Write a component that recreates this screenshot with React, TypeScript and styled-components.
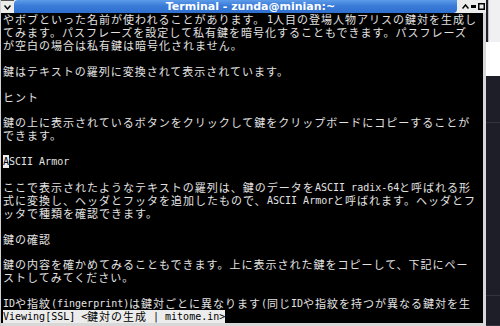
import React from "react";
import styled, { createGlobalStyle } from "styled-components";

const Global = createGlobalStyle`
  html, body { margin: 0; padding: 0; background: #1f1f2b; }
  body { width: 500px; height: 326px; overflow: hidden; }
`;

const Screen = styled.div`
  display: flex;
  width: 500px;
  height: 326px;
  overflow: hidden;
`;

const Window = styled.div`
  display: flex;
  flex-direction: column;
  width: 486px;
  height: 326px;
  background: #d8d8d8;
  border-left: 1px solid #cfcfcf;
  box-sizing: border-box;
`;

const TitleBar = styled.div`
  display: flex;
  align-items: stretch;
  height: 13px;
  background: #e9e9e9;
`;

const MenuButton = styled.div`
  width: 13px;
  display: flex;
  align-items: center;
  justify-content: center;
  background: #ececec;
  border-top: 1px solid #555;
  box-sizing: border-box;
`;

const TitleStrip = styled.div`
  flex: 1;
  display: flex;
  align-items: center;
  justify-content: center;
  padding-left: 30px;
  background: linear-gradient(#5d9ce9, #3a7bd8 45%, #2f6fcf);
  border-radius: 4px 0 4px 0;
  color: #fff;
  font-family: "DejaVu Sans", sans-serif;
  font-weight: bold;
  font-size: 11px;
  line-height: 13px;
  white-space: nowrap;
`;

const Controls = styled.div`
  width: 28px;
  display: flex;
  align-items: center;
  justify-content: flex-end;
  gap: 2px;
  padding-right: 1px;
  background: #ececec;
`;

const Body = styled.div`
  flex: 1;
  display: flex;
  flex-direction: column;
  background: #000;
  padding-left: 2px;
  margin-right: 3px;
  margin-bottom: 3px;
  overflow: hidden;
`;

const Line = styled.div`
  display: flex;
  align-items: center;
  height: 13px;
  white-space: pre;
  color: #e2e2e2;
`;

const Run = styled.span<{ $cells: number; $wide: boolean; $inverse?: boolean }>`
  display: inline-block;
  flex: none;
  width: ${(p) => p.$cells * (p.$wide ? 12 : 6)}px;
  line-height: 13px;
  font-family: ${(p) =>
    p.$wide ? '"Noto Sans CJK JP", sans-serif' : '"DejaVu Sans Mono", monospace'};
  font-size: ${(p) => (p.$wide ? "11px" : "10px")};
  letter-spacing: ${(p) => (p.$wide ? "1px" : "0")};
  background: ${(p) => (p.$inverse ? "#ececec" : "transparent")};
  color: ${(p) => (p.$inverse ? "#000" : "#e2e2e2")};
`;

const Desktop = styled.div`
  flex: 1;
  display: flex;
  flex-direction: column;
`;

const DeskTop = styled.div`
  height: 42px;
  background: #f0f0f2;
  border-left: 1px solid #c4c4c8;
  margin-left: 2px;
`;

const DeskWhite = styled.div`
  height: 35px;
  background: #fff;
`;

const DeskPanel = styled.div<{ $h: number }>`
  height: ${(p) => p.$h}px;
  background: #1e1e29;
  border-bottom: 1px solid #34343f;
`;

const lines: string[] = [
  "やボブといった名前が使われることがあります。1人目の登場人物アリスの鍵対を生成し",
  "てみます。パスフレーズを設定して私有鍵を暗号化することもできます。パスフレーズ",
  "が空白の場合は私有鍵は暗号化されません。",
  "",
  "鍵はテキストの羅列に変換されて表示されています。",
  "",
  "ヒント",
  "",
  "鍵の上に表示されているボタンをクリックして鍵をクリップボードにコピーすることが",
  "できます。",
  "",
  "ASCII Armor",
  "",
  "ここで表示されたようなテキストの羅列は、鍵のデータをASCII radix-64と呼ばれる形",
  "式に変換し、ヘッダとフッタを追加したもので、ASCII Armorと呼ばれます。ヘッダとフ",
  "ッタで種類を確認できます。",
  "",
  "鍵の確認",
  "",
  "鍵の内容を確かめてみることもできます。上に表示された鍵をコピーして、下記にペー",
  "ストしてみてください。",
  "",
  "IDや指紋(fingerprint)は鍵対ごとに異なります(同じIDや指紋を持つが異なる鍵対を生",
];

const isWide = (ch: string) => /[\u2E80-\u9FFF\uFF00-\uFF60\uFFE0-\uFFE6]/.test(ch);

type Seg = { text: string; wide: boolean };

function splitRuns(s: string): Seg[] {
  const out: Seg[] = [];
  for (const ch of Array.from(s)) {
    const w = isWide(ch);
    const last = out[out.length - 1];
    if (last && last.wide === w) last.text += ch;
    else out.push({ text: ch, wide: w });
  }
  return out;
}

function Runs({ text, inverse }: { text: string; inverse?: boolean }) {
  return (
    <>
      {splitRuns(text).map((r, i) => (
        <Run key={i} $cells={Array.from(r.text).length} $wide={r.wide} $inverse={inverse}>
          {r.text}
        </Run>
      ))}
    </>
  );
}

const Chevron = () => (
  <svg width="7" height="5" viewBox="0 0 7 5">
    <path d="M0.5 0.5 L3.5 4 L6.5 0.5" fill="none" stroke="#000" strokeWidth="1.4" />
  </svg>
);

const UpIcon = () => (
  <svg width="7" height="5" viewBox="0 0 7 5">
    <path d="M0.5 4.5 L3.5 1 L6.5 4.5" fill="none" stroke="#000" strokeWidth="1.5" />
  </svg>
);

const MinIcon = () => (
  <svg width="5" height="5" viewBox="0 0 5 5">
    <rect x="0" y="1" width="5" height="3" fill="#000" />
  </svg>
);

const MaxIcon = () => (
  <svg width="7" height="7" viewBox="0 0 7 7">
    <rect x="0.75" y="0.75" width="5.5" height="5.5" fill="none" stroke="#000" strokeWidth="1.5" />
  </svg>
);

export default function App() {
  return (
    <>
      <Global />
      <Screen>
        <Window>
          <TitleBar>
            <MenuButton>
              <Chevron />
            </MenuButton>
            <TitleStrip>Terminal - zunda@minian:~</TitleStrip>
            <Controls>
              <UpIcon />
              <MinIcon />
              <MaxIcon />
            </Controls>
          </TitleBar>
          <Body>
            {lines.map((l, i) =>
              i === 11 ? (
                <Line key={i}>
                  <Runs text="A" inverse />
                  <Runs text={l.slice(1)} />
                </Line>
              ) : (
                <Line key={i}>
                  <Runs text={l} />
                </Line>
              )
            )}
            <Line>
              <Runs text="Viewing[SSL] <鍵対の生成 | mitome.in>" inverse />
            </Line>
          </Body>
        </Window>
        <Desktop>
          <DeskTop />
          <DeskWhite />
          <DeskPanel $h={46} />
          <DeskPanel $h={174} />
          <DeskPanel $h={29} />
        </Desktop>
      </Screen>
    </>
  );
}
